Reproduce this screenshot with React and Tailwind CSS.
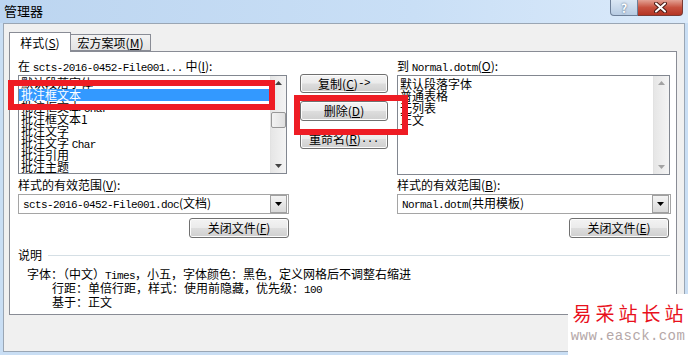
import React from "react";

// half-width latin in the SimSun-like dialog font
function M({ children }) {
    return <span className="font-['Liberation_Mono',monospace] text-[11px] tracking-[-0.6px]">{children}</span>;
}

function Btn({ children, className = "" }) {
    return (
        <div className={`flex items-center justify-center border border-[#707070] rounded-[3px] bg-[linear-gradient(#f3f3f3_0%,#ebebeb_48%,#dddddd_52%,#cfcfcf_100%)] shadow-[inset_0_0_0_1px_#fcfcfc] text-[12px] leading-none text-black ${className}`}>
            {children}
        </div>
    );
}

function Arrow({ up, color = "#000" }) {
    return (
        <svg width="7" height="4" viewBox="0 0 7 4">
            {up ? <path d="M3.5 0 L7 4 L0 4 Z" fill={color} /> : <path d="M0 0 L7 0 L3.5 4 Z" fill={color} />}
        </svg>
    );
}

function ScrollBar({ thumb }) {
    return (
        <div className="w-[16px] h-full flex flex-col items-center justify-between bg-[linear-gradient(90deg,#e6e6e6,#f4f4f4)] border-l border-[#e2e2e2] py-[5px]">
            <Arrow up color={thumb ? "#444" : "#a3a3a3"} />
            {thumb && (
                <div className="w-[15px] h-[16px] -mt-[10px] border border-[#979797] rounded-[2px] bg-[linear-gradient(90deg,#f2f2f2,#e0e0e0)]" />
            )}
            <Arrow color={thumb ? "#444" : "#a3a3a3"} />
        </div>
    );
}

function Row({ children, selected }) {
    return (
        <div className={`h-[12px] leading-[12px] pl-[2px] whitespace-nowrap text-[12px] ${selected ? "bg-[#3399ff] text-white" : "text-black"}`}>
            {children}
        </div>
    );
}

function Combo({ children }) {
    return (
        <div className="h-[20px] flex items-center border border-[#a5a5a5] bg-white">
            <div className="flex-1 pl-[4px] text-[12px] leading-none whitespace-nowrap">{children}</div>
            <div className="w-[17px] h-[18px] flex items-center justify-center border border-[#a0a0a0] bg-[linear-gradient(#f4f4f4,#d9d9d9)] mr-px">
                <Arrow />
            </div>
        </div>
    );
}

export default function App() {
    const leftItems = ["默认段落字体", "批注框文本", <>批注框文本 <M>Char</M></>, "批注框文本1", "批注文字", <>批注文字 <M>Char</M></>, "批注引用", "批注主题"];
    const rightItems = ["默认段落字体", "普通表格", "无列表", "正文"];

    return (
        <div className="relative w-[688px] h-[355px] overflow-hidden bg-[#c9def4] font-['Noto_Sans_CJK_SC',sans-serif] text-black">
            {/* Title bar */}
            <div className="h-[23px] flex items-start justify-between bg-[linear-gradient(90deg,#bcd5f0,#c9dff6_60%,#dbeafa)]">
                <div className="pl-[4px] pt-[3px] text-[13px] leading-[15px] text-black">管理器</div>
                <div className="flex mr-[5px]">
                    <div className="w-[28px] h-[16px] flex items-center justify-center border border-[#6d7f98] border-t-0 rounded-bl-[4px] bg-[linear-gradient(#dbe7f4,#b7cbe2)] text-[12px] font-bold text-white [text-shadow:0_0_2px_#38506e] leading-none">?</div>
                    <div className="w-[45px] h-[16px] flex items-center justify-center border border-[#7a3a34] border-t-0 border-l-0 rounded-br-[4px] bg-[linear-gradient(#e3a194,#c7513f_50%,#b43424)]">
                        <svg width="13" height="11" viewBox="0 0 13 11">
                            <path d="M2 1.5 L11 9.5 M11 1.5 L2 9.5" stroke="#4a1b16" strokeWidth="4" strokeLinecap="round" />
                            <path d="M2 1.5 L11 9.5 M11 1.5 L2 9.5" stroke="#fff" strokeWidth="2" strokeLinecap="round" />
                        </svg>
                    </div>
                </div>
            </div>

            {/* Dialog body */}
            <div className="ml-[3px] w-[682px] h-[329px] border border-[#9aa6b4] bg-[#f0f0f0] pl-[5px] pt-[8px]">
                {/* Tabs */}
                <div className="flex items-end h-[19px] relative z-10">
                    <div className="w-[62px] h-[20px] -mb-px flex items-center justify-center border border-[#898c95] border-b-0 bg-white text-[12px]">
                        样式(<u>S</u>)
                    </div>
                    <div className="w-[80px] h-[17px] flex items-center justify-center border border-[#898c95] border-l-0 bg-[linear-gradient(#f3f3f3,#e3e3e3)] text-[12px]">
                        宏方案项(<u>M</u>)
                    </div>
                </div>

                {/* Tab panel */}
                <div className="w-[668px] h-[264px] border border-[#898c95] bg-white pl-[8px] pt-[8px] text-[12px]">
                    <div className="flex">
                        {/* Left column */}
                        <div className="w-[271px] flex flex-col">
                            <div className="h-[12px] leading-[12px] whitespace-nowrap">在 <M>scts-2016-0452-File001...</M> 中(<u>I</u>):</div>
                            <div className="mt-[3px] w-[269px] h-[99px] flex border border-[#828790] overflow-hidden">
                                <div className="flex-1 pt-px overflow-hidden">
                                    {leftItems.map((t, i) => <Row key={i} selected={i === 1}>{t}</Row>)}
                                </div>
                                <ScrollBar thumb />
                            </div>
                            <div className="mt-[5px] h-[12px] leading-[12px] whitespace-nowrap">样式的有效范围(<u>V</u>):</div>
                            <div className="mt-[3px]"><Combo><M>scts-2016-0452-File001.doc</M>(文档)</Combo></div>
                            <div className="mt-[4px] flex justify-end">
                                <Btn className="w-[100px] h-[20px]">关闭文件(<u>F</u>)</Btn>
                            </div>
                        </div>

                        {/* Middle buttons */}
                        <div className="ml-[11px] w-[88px] pt-[14px] flex flex-col gap-[8px]">
                            <Btn className="h-[19px]">复制(<u>C</u>) <M>-&gt;</M></Btn>
                            <Btn className="h-[20px]">删除(<u>D</u>)</Btn>
                            <Btn className="h-[20px]">重命名(<u>R</u>)<M>...</M></Btn>
                        </div>

                        {/* Right column */}
                        <div className="ml-[9px] w-[274px] flex flex-col">
                            <div className="h-[12px] leading-[12px] whitespace-nowrap">到 <M>Normal.dotm</M>(<u>O</u>):</div>
                            <div className="mt-[3px] w-[273px] h-[100px] flex border border-[#828790] overflow-hidden">
                                <div className="flex-1 pt-[2px] overflow-hidden">
                                    {rightItems.map((t, i) => <Row key={i}>{t}</Row>)}
                                </div>
                                <ScrollBar />
                            </div>
                            <div className="mt-[4px] h-[12px] leading-[12px] whitespace-nowrap">样式的有效范围(<u>B</u>):</div>
                            <div className="mt-[3px]"><Combo><M>Normal.dotm</M>(共用模板)</Combo></div>
                            <div className="mt-[4px] flex justify-end pr-[2px]">
                                <Btn className="w-[100px] h-[20px]">关闭文件(<u>E</u>)</Btn>
                            </div>
                        </div>
                    </div>

                    {/* Description */}
                    <div className="mt-[11px] flex items-center gap-[6px] pr-[6px]">
                        <span className="leading-[12px]">说明</span>
                        <div className="flex-1 h-px bg-[#d5dfe5]" />
                    </div>
                    <div className="mt-[7px] pl-[9px] leading-[11px] whitespace-nowrap">
                        <div>字体：（中文）<M>Times</M>，小五，字体颜色：黑色，定义网格后不调整右缩进</div>
                        <div className="pl-[25px]">行距：单倍行距，样式：使用前隐藏，优先级：<M>100</M></div>
                        <div className="pl-[25px]">基于：正文</div>
                    </div>
                </div>
            </div>

            {/* Red annotation boxes */}
            <div className="absolute left-[8px] top-[80px] w-[267px] h-[30px] border-[6px] border-[#ee1c24]" />
            <div className="absolute left-[294px] top-[95px] w-[114px] h-[40px] border-[6px] border-[#ee1c24]" />

            {/* Watermark */}
            <div className="absolute right-0 bottom-0 w-[120px] h-[61px] bg-white flex flex-col items-center pt-[8px]">
                <div className="text-[19px] leading-[22px] tracking-[4px] text-[#e8101c] pl-[4px]">易采站长站</div>
                <div className="mt-[4px] font-['Liberation_Mono',monospace] text-[14px] leading-[16px] tracking-[0.4px] text-[#b5a8a8]">www.easck.com</div>
            </div>
        </div>
    );
}
